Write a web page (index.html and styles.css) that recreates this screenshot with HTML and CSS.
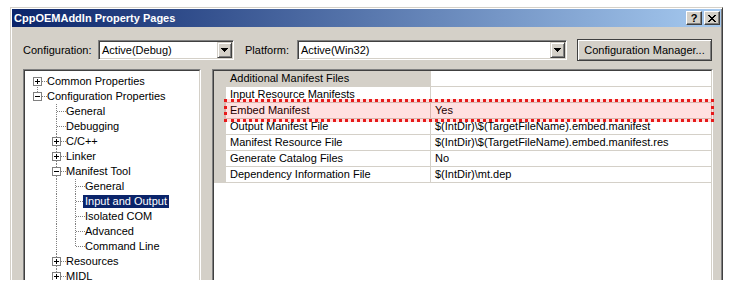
FILE: index.html
```html
<!DOCTYPE html>
<html>
<head>
    <title>CppOEMAddIn Property Pages</title>
    <meta charset="UTF-8">
    <link rel="stylesheet" href="styles.css">
</head>
<body>
    <!-- tree line pieces, 19x15 each -->
    <svg class="defs" width="0" height="0">
        <symbol id="first" viewBox="0 0 19 15"><path class="dot" d="M9.5 7V15M10 7.5H19"/></symbol>
        <symbol id="last" viewBox="0 0 19 15"><path class="dot" d="M9.5 0V8M10 7.5H19"/></symbol>
        <symbol id="tee" viewBox="0 0 19 15"><path class="dot" d="M9.5 0V15M10 7.5H19"/></symbol>
        <symbol id="pipe" viewBox="0 0 19 15"><path class="dot" d="M9.5 0V15"/></symbol>
        <symbol id="plus" viewBox="0 0 19 15"><rect x="5.5" y="3.5" width="8" height="8" fill="#fff" stroke="#808080"/><path d="M7 7.5H12M9.5 5V10" stroke="#000"/></symbol>
        <symbol id="minus" viewBox="0 0 19 15"><rect x="5.5" y="3.5" width="8" height="8" fill="#fff" stroke="#808080"/><path d="M7 7.5H12" stroke="#000"/></symbol>
    </svg>

    <div class="window">
        <div class="titlebar">
            <span class="title">CppOEMAddIn Property Pages</span>
            <div class="caption-buttons">
                <span class="cap-btn">?</span>
                <span class="cap-btn">
                    <svg width="8" height="7" viewBox="0 0 8 7"><path d="M0 0h2v1h1v1h2v-1h1v-1h2v1h-1v1h-1v1h-1v1h1v1h1v1h1v1h-2v-1h-1v-1h-2v1h-1v1h-2v-1h1v-1h1v-1h1v-1h-1v-1h-1v-1h-1z"/></svg>
                </span>
            </div>
        </div>

        <div class="toolbar">
            <span class="label label-config">Configuration:</span>
            <div class="combo combo-config">
                <span class="combo-text">Active(Debug)</span>
                <span class="combo-arrow"><svg width="7" height="4" viewBox="0 0 7 4"><path d="M0 0h7v1h-1v1h-1v1h-1v1h-1v-1h-1v-1h-1v-1h-1z"/></svg></span>
            </div>
            <span class="label label-platform">Platform:</span>
            <div class="combo combo-platform">
                <span class="combo-text">Active(Win32)</span>
                <span class="combo-arrow"><svg width="7" height="4" viewBox="0 0 7 4"><path d="M0 0h7v1h-1v1h-1v1h-1v1h-1v-1h-1v-1h-1v-1h-1z"/></svg></span>
            </div>
            <button class="btn">Configuration Manager...</button>
        </div>

        <div class="panels">
            <div class="sunken tree-panel">
                <div class="inner tree">
                    <div class="node"><svg class="g"><use href="#first"/><use href="#plus"/></svg><span class="text">Common Properties</span></div>
                    <div class="node"><svg class="g"><use href="#last"/><use href="#minus"/></svg><span class="text">Configuration Properties</span></div>
                    <div class="node"><svg class="g"></svg><svg class="g"><use href="#tee"/></svg><span class="text">General</span></div>
                    <div class="node"><svg class="g"></svg><svg class="g"><use href="#tee"/></svg><span class="text">Debugging</span></div>
                    <div class="node"><svg class="g"></svg><svg class="g"><use href="#tee"/><use href="#plus"/></svg><span class="text">C/C++</span></div>
                    <div class="node"><svg class="g"></svg><svg class="g"><use href="#tee"/><use href="#plus"/></svg><span class="text">Linker</span></div>
                    <div class="node"><svg class="g"></svg><svg class="g"><use href="#tee"/><use href="#minus"/></svg><span class="text">Manifest Tool</span></div>
                    <div class="node"><svg class="g"></svg><svg class="g"><use href="#pipe"/></svg><svg class="g"><use href="#tee"/></svg><span class="text">General</span></div>
                    <div class="node"><svg class="g"></svg><svg class="g"><use href="#pipe"/></svg><svg class="g"><use href="#tee"/></svg><span class="text selected">Input and Output</span></div>
                    <div class="node"><svg class="g"></svg><svg class="g"><use href="#pipe"/></svg><svg class="g"><use href="#tee"/></svg><span class="text">Isolated COM</span></div>
                    <div class="node"><svg class="g"></svg><svg class="g"><use href="#pipe"/></svg><svg class="g"><use href="#tee"/></svg><span class="text">Advanced</span></div>
                    <div class="node"><svg class="g"></svg><svg class="g"><use href="#pipe"/></svg><svg class="g"><use href="#last"/></svg><span class="text">Command Line</span></div>
                    <div class="node"><svg class="g"></svg><svg class="g"><use href="#tee"/><use href="#plus"/></svg><span class="text">Resources</span></div>
                    <div class="node"><svg class="g"></svg><svg class="g"><use href="#tee"/><use href="#plus"/></svg><span class="text">MIDL</span></div>
                </div>
            </div>

            <div class="sunken grid-panel">
                <div class="inner grid">
                    <div class="row active">
                        <span class="gutter"></span><span class="name">Additional Manifest Files</span><span class="value"></span>
                    </div>
                    <div class="row">
                        <span class="gutter"></span><span class="name">Input Resource Manifests</span><span class="value"></span>
                    </div>
                    <div class="row">
                        <span class="gutter"></span><span class="name">Embed Manifest</span><span class="value">Yes</span>
                    </div>
                    <div class="row">
                        <span class="gutter"></span><span class="name">Output Manifest File</span><span class="value">$(IntDir)\$(TargetFileName).embed.manifest</span>
                    </div>
                    <div class="row">
                        <span class="gutter"></span><span class="name">Manifest Resource File</span><span class="value">$(IntDir)\$(TargetFileName).embed.manifest.res</span>
                    </div>
                    <div class="row">
                        <span class="gutter"></span><span class="name">Generate Catalog Files</span><span class="value">No</span>
                    </div>
                    <div class="row">
                        <span class="gutter"></span><span class="name">Dependency Information File</span><span class="value">$(IntDir)\mt.dep</span>
                    </div>
                    <div class="mark"></div>
                </div>
            </div>
        </div>
    </div>
</body>
</html>
```

FILE: styles.css
```css
body {
    margin: 0;
    background-color: #fff;
    font-family: "Liberation Sans", Arial, sans-serif;
    font-size: 11px;
    color: #000;
    overflow: hidden;
}

.defs {
    display: block;
    width: 0;
    height: 0;
}

.dot {
    fill: none;
    stroke: #808080;
    stroke-dasharray: 1 1;
}

.window {
    margin: 7px 0 0 10px;
    width: 713px;
    height: 273px;
    box-sizing: border-box;
    background-color: #d4d0c8;
    border: 1px solid;
    border-color: #d4d0c8 #404040 #404040 #d4d0c8;
    border-bottom: 0;
    padding: 1px 1px 0 1px;
    box-shadow: inset 1px 1px #fff, inset -1px 0 #808080;
    overflow: hidden;
}

.titlebar {
    display: flex;
    align-items: center;
    height: 18px;
    padding: 0 1px 0 2px;
    background: linear-gradient(to right, #0a246a, #a6caf0);
    color: #fff;
    font-weight: bold;
}

.caption-buttons {
    display: flex;
    gap: 2px;
    margin-left: auto;
}

.cap-btn {
    display: flex;
    align-items: center;
    justify-content: center;
    width: 16px;
    height: 14px;
    box-sizing: border-box;
    background-color: #d4d0c8;
    color: #000;
    font-size: 11px;
    border: 1px solid;
    border-color: #fff #404040 #404040 #fff;
    box-shadow: inset -1px -1px #808080;
}

.toolbar {
    display: flex;
    align-items: center;
    height: 22px;
    margin-top: 12px;
    padding-left: 11px;
}

.label-config {
    width: 75px;
}

.label-platform {
    width: 52px;
    margin-left: 11px;
}

.combo {
    display: flex;
    align-items: center;
    height: 20px;
    box-sizing: border-box;
    padding: 1px 1px 1px 2px;
    background-color: #fff;
    border: 1px solid;
    border-color: #808080 #fff #fff #808080;
    box-shadow: inset 1px 1px #404040, inset -1px -1px #d4d0c8;
}

.combo-config {
    width: 136px;
}

.combo-platform {
    width: 270px;
}

.combo-text {
    padding-left: 1px;
}

.combo-arrow {
    display: flex;
    align-items: center;
    justify-content: center;
    margin-left: auto;
    width: 15px;
    height: 16px;
    box-sizing: border-box;
    background-color: #d4d0c8;
    border: 1px solid;
    border-color: #d4d0c8 #404040 #404040 #d4d0c8;
    box-shadow: inset 1px 1px #fff, inset -1px -1px #808080;
}

.btn {
    width: 135px;
    height: 22px;
    margin-left: 10px;
    padding: 0;
    background-color: #d4d0c8;
    border: 1px solid #404040;
    box-shadow: inset 1px 1px #fff, inset -1px -1px #808080;
    font-family: inherit;
    font-size: 11px;
    color: #000;
}

.panels {
    display: flex;
    align-items: flex-start;
    gap: 11px;
    margin-top: 8px;
    padding-left: 11px;
}

.sunken {
    border: 1px solid;
    border-color: #808080 #fff #fff #808080;
}

.inner {
    border: 1px solid;
    border-color: #404040 #d4d0c8 #d4d0c8 #404040;
    height: 300px;
    background-color: #fff;
}

.tree-panel {
    width: 178px;
    box-sizing: border-box;
}

.tree {
    padding: 3px 0 0 3px;
}

.node {
    display: flex;
    align-items: center;
    height: 15px;
    white-space: nowrap;
}

.g {
    width: 19px;
    height: 15px;
    flex: none;
}

.text {
    margin-left: -2px;
    padding: 0 2px;
    line-height: 13px;
}

.selected {
    background-color: #0a246a;
    color: #fff;
}

.grid-panel {
    width: 501px;
    box-sizing: border-box;
}

.grid {
    position: relative;
}

.row {
    display: flex;
    height: 16px;
    line-height: 15px;
    white-space: nowrap;
}

.gutter {
    width: 12px;
    flex: none;
    background-color: #d4d0c8;
}

.name {
    width: 205px;
    flex: none;
    box-sizing: border-box;
    padding-left: 4px;
    border-right: 1px solid #d4d0c8;
    border-bottom: 1px solid #d4d0c8;
}

.value {
    flex: 1;
    padding-left: 4px;
    border-bottom: 1px solid #d4d0c8;
}

.row.active .name {
    background-color: #d4d0c8;
}

/* annotation drawn over the Embed Manifest row */
.mark {
    position: absolute;
    left: 10px;
    top: 28px;
    width: 484px;
    height: 17px;
    border: 3px dotted #e61a1a;
    background-color: rgba(255, 0, 0, 0.12);
}
```
